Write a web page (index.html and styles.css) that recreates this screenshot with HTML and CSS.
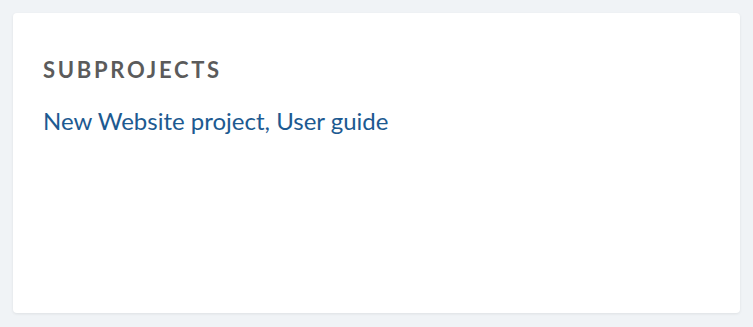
FILE: index.html
```html
<!DOCTYPE html>
<html>
<head>
<meta charset="utf-8">
<link rel="stylesheet" href="styles.css">
</head>
<body>
<div class="page">
  <section class="card">
    <h2 class="card-title">Subprojects</h2>
    <div class="links"><a href="#">New Website project</a>, <a href="#">User guide</a></div>
  </section>
</div>
</body>
</html>
```
FILE: styles.css
```css
html, body { margin: 0; padding: 0; }
body {
  background: #f0f3f6;
  font-family: Lato, "Open Sans", sans-serif;
  width: 753px;
  height: 327px;
}
.page { padding: 13px 13px 0 13px; }
.card {
  background: #fff;
  border-radius: 4px;
  box-shadow: 0 1px 3px rgba(0,0,0,0.08);
  height: 300px;
  box-sizing: border-box;
  padding: 30px 30px;
}
.card-title {
  margin: 0;
  padding-top: 14px;
  font-size: 22px;
  font-weight: 700;
  letter-spacing: 2.7px;
  text-transform: uppercase;
  color: #5b5b5b;
  line-height: 26px;
}
.links {
  margin-top: 23px;
  font-size: 24px;
  line-height: 30px;
  color: #1d5a91;
}
.links a { color: #1d5a91; text-decoration: none; }
```
